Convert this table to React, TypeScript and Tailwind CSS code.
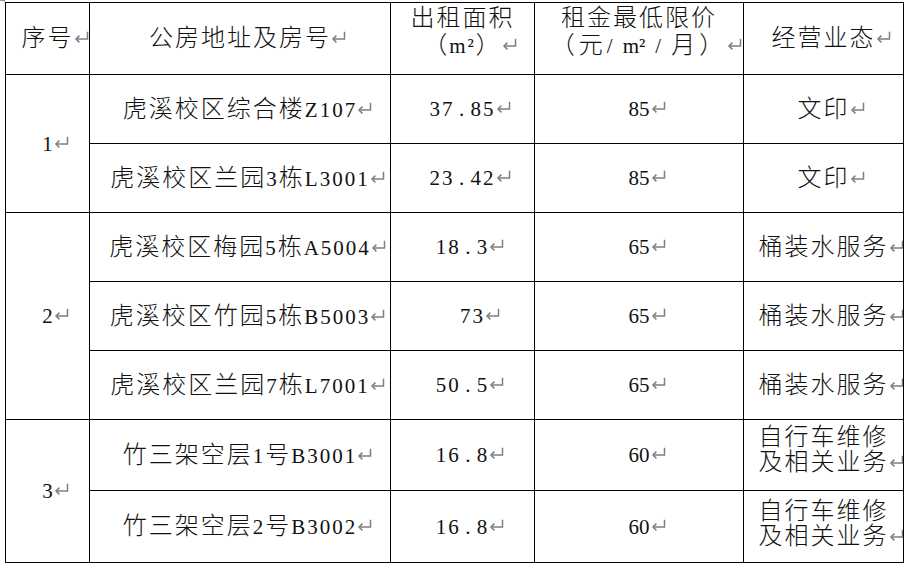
import React from "react";

const Arrow = ({ gap = 0 }: { gap?: number }) => (
  <svg
    width="15"
    height="12"
    viewBox="0 0 15 12"
    className="inline-block align-[3px]"
    style={{ marginLeft: gap, marginRight: -(15 + gap) }}
  >
    <path d="M13.5 0.8 V8 H2" fill="none" stroke="#7f7f7f" strokeWidth="1.5" />
    <path d="M5.4 4.6 L2 8 L5.4 11.4" fill="none" stroke="#7f7f7f" strokeWidth="1.5" />
  </svg>
);

const isCJK = (c: string) => /[\u3000-\u303f\u4e00-\u9fff\uff00-\uffef]/.test(c);

function Mixed({ text }: { text: string }) {
  const segs: { t: string; cjk: boolean }[] = [];
  for (const ch of text) {
    const c = isCJK(ch);
    const last = segs[segs.length - 1];
    if (last && last.cjk === c) last.t += ch;
    else segs.push({ t: ch, cjk: c });
  }
  return (
    <>
      {segs.map((s, i) =>
        s.cjk ? (
          <span key={i} className="text-[24px] font-light">
            {s.t}
          </span>
        ) : (
          <span key={i}>{s.t}</span>
        )
      )}
    </>
  );
}

function Txt({ text, arrow = true }: { text: string; arrow?: boolean }) {
  return (
    <span className="whitespace-nowrap">
      <Mixed text={text} />
      {arrow && <Arrow gap={0} />}
    </span>
  );
}

function Num({ text }: { text: string }) {
  const [a, b] = text.split(".");
  return (
    <span className="whitespace-nowrap">
      <span>{a}</span>
      {b !== undefined && (
        <>
          <span className="inline-block w-[16px] text-center">.</span>
          <span>{b}</span>
        </>
      )}
      <Arrow gap={0} />
    </span>
  );
}

const cell =
  "flex items-center justify-center overflow-hidden border-r border-b border-black leading-[26px]";

const rows = [
  { addr: "虎溪校区综合楼Z107", area: "37.85", price: "85", biz: "文印" },
  { addr: "虎溪校区兰园3栋L3001", area: "23.42", price: "85", biz: "文印" },
  { addr: "虎溪校区梅园5栋A5004", area: "18.3", price: "65", biz: "桶装水服务" },
  { addr: "虎溪校区竹园5栋B5003", area: "73", price: "65", biz: "桶装水服务" },
  { addr: "虎溪校区兰园7栋L7001", area: "50.5", price: "65", biz: "桶装水服务" },
  { addr: "竹三架空层1号B3001", area: "16.8", price: "60", biz: "two" },
  { addr: "竹三架空层2号B3002", area: "16.8", price: "60", biz: "two" },
];

const groupCells: Record<number, { label: string; cls: string }> = {
  0: { label: "1", cls: "row-start-2 row-span-2" },
  2: { label: "2", cls: "row-start-4 row-span-3" },
  5: { label: "3", cls: "row-start-7 row-span-2" },
};

export default function App() {
  return (
    <div className="relative w-[906px] h-[568px] overflow-hidden bg-white pt-[2px] pl-[5px] text-[#111] font-['Liberation_Serif','Noto_Sans_CJK_SC',serif] text-[21px] tracking-[2px]">
      <div className="absolute left-0 top-0 w-[5px] h-[1px] bg-[#9a9a9a]" />
      <div className="absolute left-[4px] top-0 w-[1px] h-[2px] bg-[#9a9a9a]" />
      <div className="grid w-[899px] grid-cols-[84px_301px_144px_209px_160px] grid-rows-[72px_69px_69px_69px_69px_69px_71px_72px] border-t border-l border-black">
        <div className={`${cell} col-start-1 row-start-1`}>
          <Txt text="序号" />
        </div>
        <div className={`${cell} col-start-2 row-start-1`}>
          <Txt text="公房地址及房号" />
        </div>
        <div className={`${cell} col-start-3 row-start-1 flex-col pb-[13px]`}>
          <div className="whitespace-nowrap">
            <Mixed text="出租面积" />
          </div>
          <div className="whitespace-nowrap">
            <span className="text-[24px] font-light">（</span>
            <span>m²</span>
            <span className="text-[24px] font-light">）</span>
            <Arrow gap={0} />
          </div>
        </div>
        <div className={`${cell} col-start-4 row-start-1 flex-col pb-[13px]`}>
          <div className="whitespace-nowrap">
            <Mixed text="租金最低限价" />
          </div>
          <div className="whitespace-nowrap">
            <span className="text-[24px] font-light tracking-[4px]">（元</span>
            <span className="tracking-[10px]">/</span>
            <span className="tracking-[0px]">m</span>
            <span className="tracking-[10px]">²/</span>
            <span className="text-[24px] font-light tracking-[4px]">月）</span>
            <Arrow gap={0} />
          </div>
        </div>
        <div className={`${cell} col-start-5 row-start-1`}>
          <Txt text="经营业态" />
        </div>

        {rows.map((r, i) => {
          const g = groupCells[i];
          return (
            <React.Fragment key={i}>
              {g && (
                <div className={`${cell} col-start-1 ${g.cls}`}>
                  <span className="whitespace-nowrap tracking-normal">
                    {g.label}
                    <Arrow gap={1} />
                  </span>
                </div>
              )}
              <div className={`${cell} col-start-2`}>
                <Txt text={r.addr} />
              </div>
              <div className={`${cell} col-start-3 ${r.area === "73" ? "pl-[20px]" : ""}`}>
                <Num text={r.area} />
              </div>
              <div className={`${cell} col-start-4`}>
                <span className="whitespace-nowrap tracking-normal">
                  {r.price}
                  <Arrow gap={1} />
                </span>
              </div>
              {r.biz === "two" ? (
                <div
                  className={`${cell} col-start-5 flex-col !leading-[24px] ${
                    i === 5 ? "pb-[10px]" : "pb-[5px]"
                  }`}
                >
                  <div className="whitespace-nowrap">
                    <Mixed text="自行车维修" />
                  </div>
                  <div>
                    <Txt text="及相关业务" />
                  </div>
                </div>
              ) : (
                <div className={`${cell} col-start-5`}>
                  <Txt text={r.biz} />
                </div>
              )}
            </React.Fragment>
          );
        })}
      </div>
    </div>
  );
}
